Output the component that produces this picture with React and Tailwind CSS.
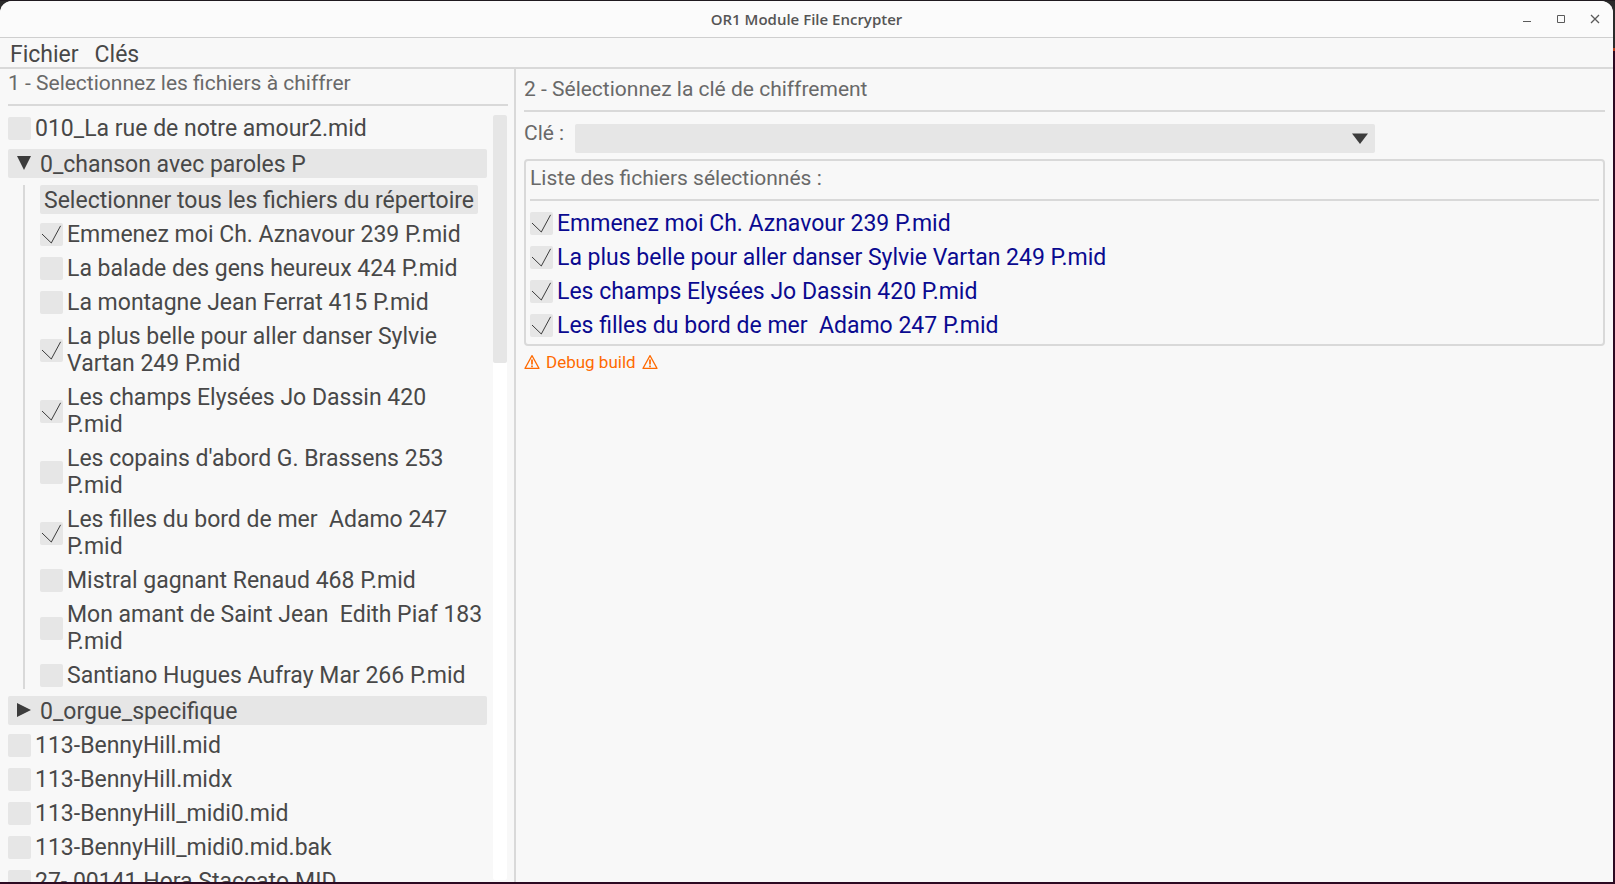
import { useState } from "react";

const FOLDER_FILES = [
  "Emmenez moi Ch. Aznavour 239 P.mid",
  "La balade des gens heureux 424 P.mid",
  "La montagne Jean Ferrat 415 P.mid",
  "La plus belle pour aller danser Sylvie Vartan 249 P.mid",
  "Les champs Elysées Jo Dassin 420 P.mid",
  "Les copains d'abord G. Brassens 253 P.mid",
  "Les filles du bord de mer  Adamo 247 P.mid",
  "Mistral gagnant Renaud 468 P.mid",
  "Mon amant de Saint Jean  Edith Piaf 183 P.mid",
  "Santiano Hugues Aufray Mar 266 P.mid",
];

const ROOT_FILES = [
  "113-BennyHill.mid",
  "113-BennyHill.midx",
  "113-BennyHill_midi0.mid",
  "113-BennyHill_midi0.mid.bak",
  "27- 00141 Hora Staccato.MID",
];

const INITIAL = [0, 3, 4, 6].map((i) => FOLDER_FILES[i]);

function FileCheck({ name, checked, onToggle, tone = "text-[#484848]" }) {
  return (
    <label className={`flex items-center gap-1 ${tone}`}>
      <span className="grid size-[23px] shrink-0">
        <input
          type="checkbox"
          checked={checked}
          onChange={() => onToggle(name)}
          className="col-start-1 row-start-1 size-full appearance-none rounded-xs bg-[#e6e6e6]"
        />
        {checked && (
          <svg viewBox="0 0 23 23" className="pointer-events-none col-start-1 row-start-1 size-full" fill="none" stroke="#3c3c3c" strokeWidth="1">
            <path d="M2 11 L11.3 20 L20.6 2.8" />
          </svg>
        )}
      </span>
      <span className="whitespace-pre-wrap">{name}</span>
    </label>
  );
}

function FolderHeader({ name, open, onClick }) {
  return (
    <button type="button" aria-expanded={open} onClick={onClick} className="flex h-[29px] w-full shrink-0 items-center gap-2 rounded-xs bg-[#e6e6e6] pt-px pl-2 text-left">
      <svg viewBox="0 0 16 16" className="size-4" fill="#3c3c3c">
        {open ? <path d="M1 0 H15 L8 14 Z" /> : <path d="M1 0 V14 L15 7 Z" />}
      </svg>
      {name}
    </button>
  );
}

function Warning() {
  return (
    <svg viewBox="0 0 16 16" className="size-4" fill="none" stroke="#ff6a00" strokeWidth="1.2">
      <path d="M8 1.6 L15 14.4 H1 Z" strokeLinejoin="round" />
      <path d="M8 5.5 V10.5 M8 11.6 V13.2" strokeWidth="1.7" />
    </svg>
  );
}

function Separator() {
  return <hr className="h-[2px] shrink-0 border-0 bg-[#d9d9d9]" />;
}

export default function App() {
  const [selected, setSelected] = useState(INITIAL);
  const [open, setOpen] = useState(true);
  const [openOrgan, setOpenOrgan] = useState(false);
  const toggle = (name) =>
    setSelected((s) => (s.includes(name) ? s.filter((n) => n !== name) : [...s, name]));
  const row = (name) => (
    <FileCheck key={name} name={name} checked={selected.includes(name)} onToggle={toggle} />
  );

  return (
    <div className="h-screen bg-[linear-gradient(to_bottom,#1f1a1f_1px,#2b2b2b_1px_48px,#b5401c_48px_51px,#2c0a22_51px)] pt-px pr-[2px] pb-[2px] font-['Roboto',sans-serif] text-[23px] leading-[27px] font-normal text-[#484848]">
      <div className="flex h-full flex-col overflow-hidden rounded-t-xl bg-[#f8f8f8]">
        <header className="grid h-[37px] shrink-0 grid-cols-[1fr_auto_1fr] items-center border-b border-[#cfcfcf] bg-[#fbfbfb]">
          <h1 className="col-start-2 font-['Open_Sans',sans-serif] text-[15px] leading-5 font-semibold text-[#555555]">OR1 Module File Encrypter</h1>
          <div className="flex justify-end gap-[18px] pr-[10px]">
            <button type="button" aria-label="Réduire">
              <svg viewBox="0 0 16 16" className="size-4" fill="#5a5a5a"><path d="M4 10 h8 v1 h-8 Z" /></svg>
            </button>
            <button type="button" aria-label="Agrandir">
              <svg viewBox="0 0 16 16" className="size-4" fill="none" stroke="#5a5a5a"><path d="M4.5 4.5 h7 v7 h-7 Z" /></svg>
            </button>
            <button type="button" aria-label="Fermer">
              <svg viewBox="0 0 16 16" className="size-4" stroke="#5a5a5a" strokeWidth="1.3"><path d="M4 4 L12 12 M12 4 L4 12" /></svg>
            </button>
          </div>
        </header>

        <nav className="flex h-[31px] shrink-0 items-center gap-4 border-b-2 border-[#d9d9d9] pt-1 pl-[10px]">
          <button type="button">Fichier</button>
          <button type="button">Clés</button>
        </nav>

        <main className="flex min-h-0 flex-1">
          <section className="flex w-[516px] shrink-0 flex-col border-r-2 border-[#d9d9d9] pl-2">
            <div className="flex flex-col gap-[7px] pr-[6px]">
              <h2 className="pt-px text-[21px] text-[#696969]">1 - Selectionnez les fichiers à chiffrer</h2>
              <Separator />
            </div>
            <div className="mt-[9px] flex min-h-0 flex-1 gap-[6px] pr-[7px]">
              <div className="flex min-w-0 flex-1 flex-col gap-[7px] overflow-hidden">
                {row("010_La rue de notre amour2.mid")}
                <FolderHeader name="0_chanson avec paroles P" open={open} onClick={() => setOpen(!open)} />
                {open && (
                  <div className="ml-[15px] flex shrink-0 flex-col items-start gap-[7px] border-l-2 border-[#d9d9d9] pr-1 pl-[15px]">
                    <button type="button" onClick={() => setSelected(FOLDER_FILES)} className="h-[29px] rounded-xs bg-[#e6e6e6] px-1 pt-px whitespace-nowrap">
                      Selectionner tous les fichiers du répertoire
                    </button>
                    {FOLDER_FILES.map(row)}
                  </div>
                )}
                <FolderHeader name="0_orgue_specifique" open={openOrgan} onClick={() => setOpenOrgan(!openOrgan)} />
                {ROOT_FILES.map(row)}
              </div>
              <div className="mb-[2px] w-[14px] rounded-xs bg-white">
                <div className="h-[32.4%] rounded-xs bg-[#e6e6e6]" />
              </div>
            </div>
          </section>

          <section className="flex min-w-0 flex-1 flex-col px-2 pt-[7px]">
            <h2 className="mb-[7px] text-[21px] text-[#696969]">2 - Sélectionnez la clé de chiffrement</h2>
            <Separator />
            <div className="mt-[9px] flex gap-[11px]">
              <label htmlFor="key" className="text-[21px] leading-[25px] text-[#696969]">Clé :</label>
              <div className="mt-[3px] grid w-[800px] max-w-full">
                <select id="key" className="col-start-1 row-start-1 h-[29px] appearance-none rounded-xs bg-[#e6e6e6] px-2">
                  <option value=""></option>
                </select>
                <svg viewBox="0 0 18 12" className="pointer-events-none col-start-1 row-start-1 mr-[6px] h-3 w-[18px] self-center justify-self-end" fill="#3c3c3c">
                  <path d="M1 0.5 H17 L9 11 Z" />
                </svg>
              </div>
            </div>
            <div className="mt-[6px] flex flex-col rounded-sm border-2 border-[#d9d9d9] px-1 pt-1 pb-[5px]">
              <h3 className="mb-[7px] text-[21px] text-[#696969]">Liste des fichiers sélectionnés :</h3>
              <Separator />
              <div className="mt-[9px] flex flex-col gap-[7px]">
                {selected.map((name) => (
                  <FileCheck key={name} name={name} checked onToggle={toggle} tone="text-[#0a0a90]" />
                ))}
              </div>
            </div>
            <p className="mt-1 flex items-center gap-[6px] text-[17px] leading-6 text-[#ff6a00]">
              <Warning />
              Debug build
              <Warning />
            </p>
          </section>
        </main>
      </div>
    </div>
  );
}
